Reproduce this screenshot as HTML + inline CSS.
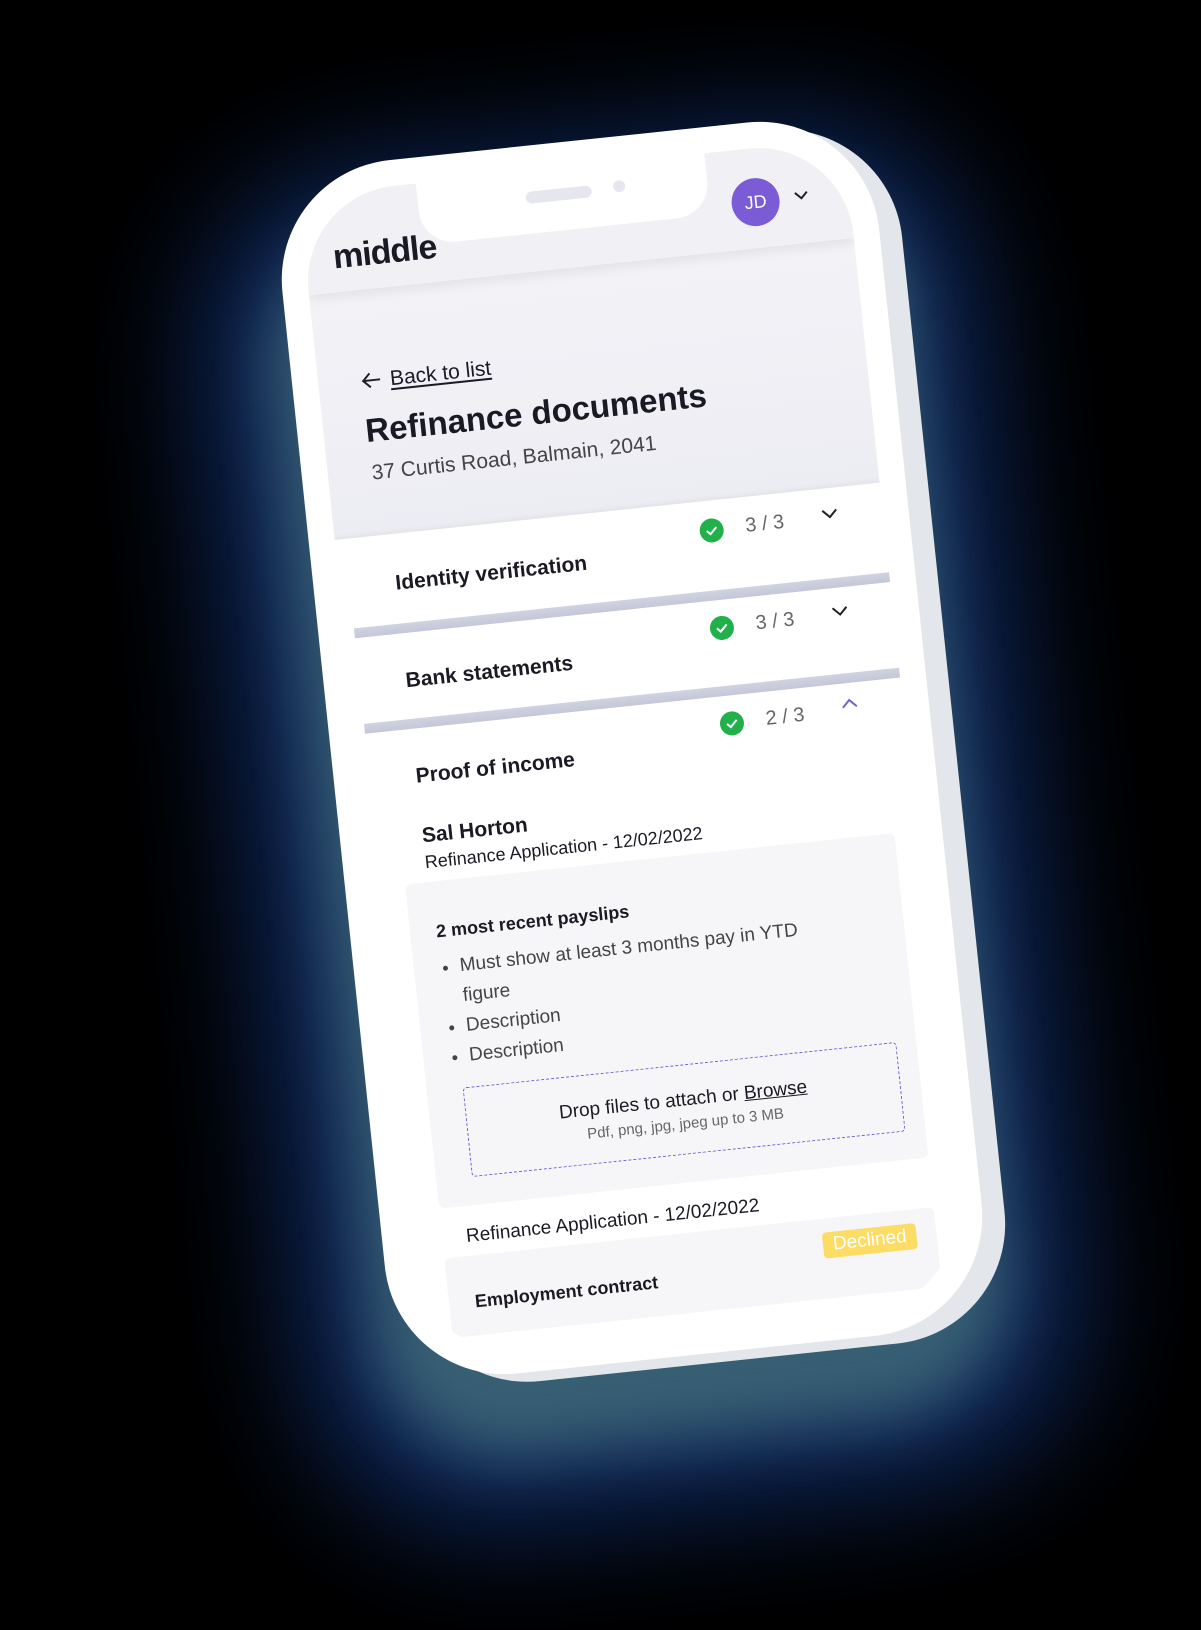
<!DOCTYPE html>
<html><head><meta charset="utf-8">
<style>
html,body{margin:0;padding:0;}
body{width:1201px;height:1630px;background:#000;position:relative;overflow:hidden;font-family:"Liberation Sans",sans-serif;color:#1a1a24;}
.glow{position:absolute;left:320px;top:200px;width:640px;height:1240px;background:#3a6275;border-radius:140px;transform:rotate(-6deg);filter:blur(30px);opacity:.95;}
.glow2{position:absolute;left:250px;top:140px;width:780px;height:1370px;background:#12306e;border-radius:180px;transform:rotate(-6deg);filter:blur(60px);opacity:.85;}
.wrap{position:absolute;left:332px;top:138px;width:600px;height:1220px;transform:rotate(-6deg);}
.side{position:absolute;left:22px;top:10px;width:600px;height:1220px;border-radius:120px;background:#e3e6ea;}
.phone{position:absolute;left:0;top:0;width:600px;height:1220px;border-radius:120px;background:#fff;overflow:hidden;}
.screen{position:absolute;left:26px;top:26px;right:26px;bottom:26px;border-radius:96px;overflow:hidden;background:#fff;}
.hdr{position:absolute;left:0;top:0;right:0;height:100px;background:#f1f1f5;box-shadow:0 6px 10px rgba(0,0,0,.06);}
.notch{position:absolute;left:118px;top:-2px;width:290px;height:64px;background:#fff;border-radius:0 0 34px 34px;}
.spk{position:absolute;left:108px;top:22px;width:66px;height:12px;border-radius:6px;background:#e5e6ee;}
.cam{position:absolute;left:196px;top:20px;width:12px;height:12px;border-radius:6px;background:#e5e6ee;}
.logo{position:absolute;left:28px;top:46px;font-size:34px;font-weight:bold;letter-spacing:-1px;color:#1a1a24;}
.av{position:absolute;left:430px;top:30px;width:48px;height:48px;border-radius:24px;background:#7b5bd6;color:#fff;font-size:18px;text-align:center;line-height:48px;}
.gray{position:absolute;left:0;top:100px;right:0;height:254px;background:linear-gradient(#f3f3f7,#ececf3);}
.back{position:absolute;left:42px;top:180px;font-size:21px;}
.back u{text-underline-offset:3px;}
.title{position:absolute;left:42px;top:222px;font-size:33px;font-weight:bold;}
.addr{position:absolute;left:44px;top:272px;font-size:21px;color:#444;}
.row{position:absolute;left:0;right:0;background:#fff;}
.row .t{position:absolute;left:56px;font-size:21px;font-weight:bold;}
.sep{position:absolute;left:10px;right:-10px;height:10px;background:linear-gradient(#d0d3e0,#c3c7d8);}
.chk{position:absolute;width:24px;height:24px;border-radius:12px;background:#22b04b;}
.cnt{position:absolute;font-size:20px;color:#666;}
.card{position:absolute;left:34px;right:22px;background:#f6f6f8;border-radius:6px;}
.drop{position:absolute;left:36px;right:20px;top:208px;height:88px;border:1.5px dashed #7b5bd6;border-radius:4px;text-align:center;}
.badge{position:absolute;right:20px;top:14px;background:#fddc66;color:#fff;font-size:19px;padding:2px 10px;border-radius:4px;}
ul{margin:0;padding-left:20px;}
</style></head><body>
<div class="glow2"></div>
<div class="glow"></div>
<div class="wrap">
 <div class="side"></div>
 <div class="phone">
  <div class="screen">
   <div class="gray"></div>
   <div class="hdr">
    <div class="notch"><div class="spk"></div><div class="cam"></div></div>
    <div class="logo">middle</div>
    <div class="av">JD</div>
    <svg style="position:absolute;left:492px;top:46px" width="16" height="12" viewBox="0 0 16 12"><path d="M2 3l6 6 6-6" fill="none" stroke="#222" stroke-width="2"/></svg>
   </div>
   <div class="back"><svg width="22" height="18" viewBox="0 0 22 18" style="vertical-align:-2px;margin-right:8px"><path d="M20 9H3M10 2L3 9l7 7" fill="none" stroke="#222" stroke-width="2"/></svg><u>Back to list</u></div>
   <div class="title">Refinance documents</div>
   <div class="addr">37 Curtis Road, Balmain, 2041</div>

   <div class="row" style="top:346px;height:90px;box-shadow:0 -2px 6px rgba(0,0,0,.05)">
     <div class="t" style="top:38px">Identity verification</div>
     <div class="chk" style="left:364px;top:18px"><svg width="24" height="24"><path d="M7 12l3.5 3.5L17 9" fill="none" stroke="#fff" stroke-width="2"/></svg></div>
     <div class="cnt" style="left:410px;top:18px">3 / 3</div>
     <svg style="position:absolute;left:486px;top:20px" width="18" height="12"><path d="M2 2l7 7 7-7" fill="none" stroke="#222" stroke-width="2"/></svg>
   </div>
   <div class="sep" style="top:436px"></div>
   <div class="row" style="top:446px;height:86px">
     <div class="t" style="top:36px">Bank statements</div>
     <div class="chk" style="left:364px;top:16px"><svg width="24" height="24"><path d="M7 12l3.5 3.5L17 9" fill="none" stroke="#fff" stroke-width="2"/></svg></div>
     <div class="cnt" style="left:410px;top:16px">3 / 3</div>
     <svg style="position:absolute;left:486px;top:18px" width="18" height="12"><path d="M2 2l7 7 7-7" fill="none" stroke="#222" stroke-width="2"/></svg>
   </div>
   <div class="sep" style="top:532px"></div>
   <div class="row" style="top:542px;bottom:0">
     <div class="t" style="top:36px">Proof of income</div>
     <div class="chk" style="left:364px;top:16px"><svg width="24" height="24"><path d="M7 12l3.5 3.5L17 9" fill="none" stroke="#fff" stroke-width="2"/></svg></div>
     <div class="cnt" style="left:410px;top:16px">2 / 3</div>
     <svg style="position:absolute;left:486px;top:14px" width="18" height="12"><path d="M2 10l7-7 7 7" fill="none" stroke="#7b5bd6" stroke-width="2"/></svg>
     <div style="position:absolute;left:56px;top:96px;font-size:21px;font-weight:bold">Sal Horton</div>
     <div style="position:absolute;left:56px;top:124px;font-size:18px">Refinance Application - 12/02/2022</div>
     <div class="card" style="top:154px;height:326px">
       <div style="position:absolute;left:26px;top:40px;font-size:18px;font-weight:bold">2 most recent payslips</div>
       <div style="position:absolute;left:26px;top:72px;width:400px;font-size:19px;color:#444;line-height:30px">
        <ul><li>Must show at least 3 months pay in YTD figure</li><li>Description</li><li>Description</li></ul>
       </div>
       <div class="drop">
         <div style="margin-top:24px;font-size:19px">Drop files to attach or <u>Browse</u></div>
         <div style="font-size:15px;color:#666;margin-top:4px">Pdf, png, jpg, jpeg up to 3 MB</div>
       </div>
     </div>
     <div style="position:absolute;left:58px;top:500px;font-size:19px">Refinance Application - 12/02/2022</div>
     <div class="card" style="top:530px;height:80px">
       <div style="position:absolute;left:26px;top:36px;font-size:18px;font-weight:bold">Employment contract</div>
       <div class="badge">Declined</div>
     </div>
   </div>
  </div>
 </div>
</div>
</body></html>
